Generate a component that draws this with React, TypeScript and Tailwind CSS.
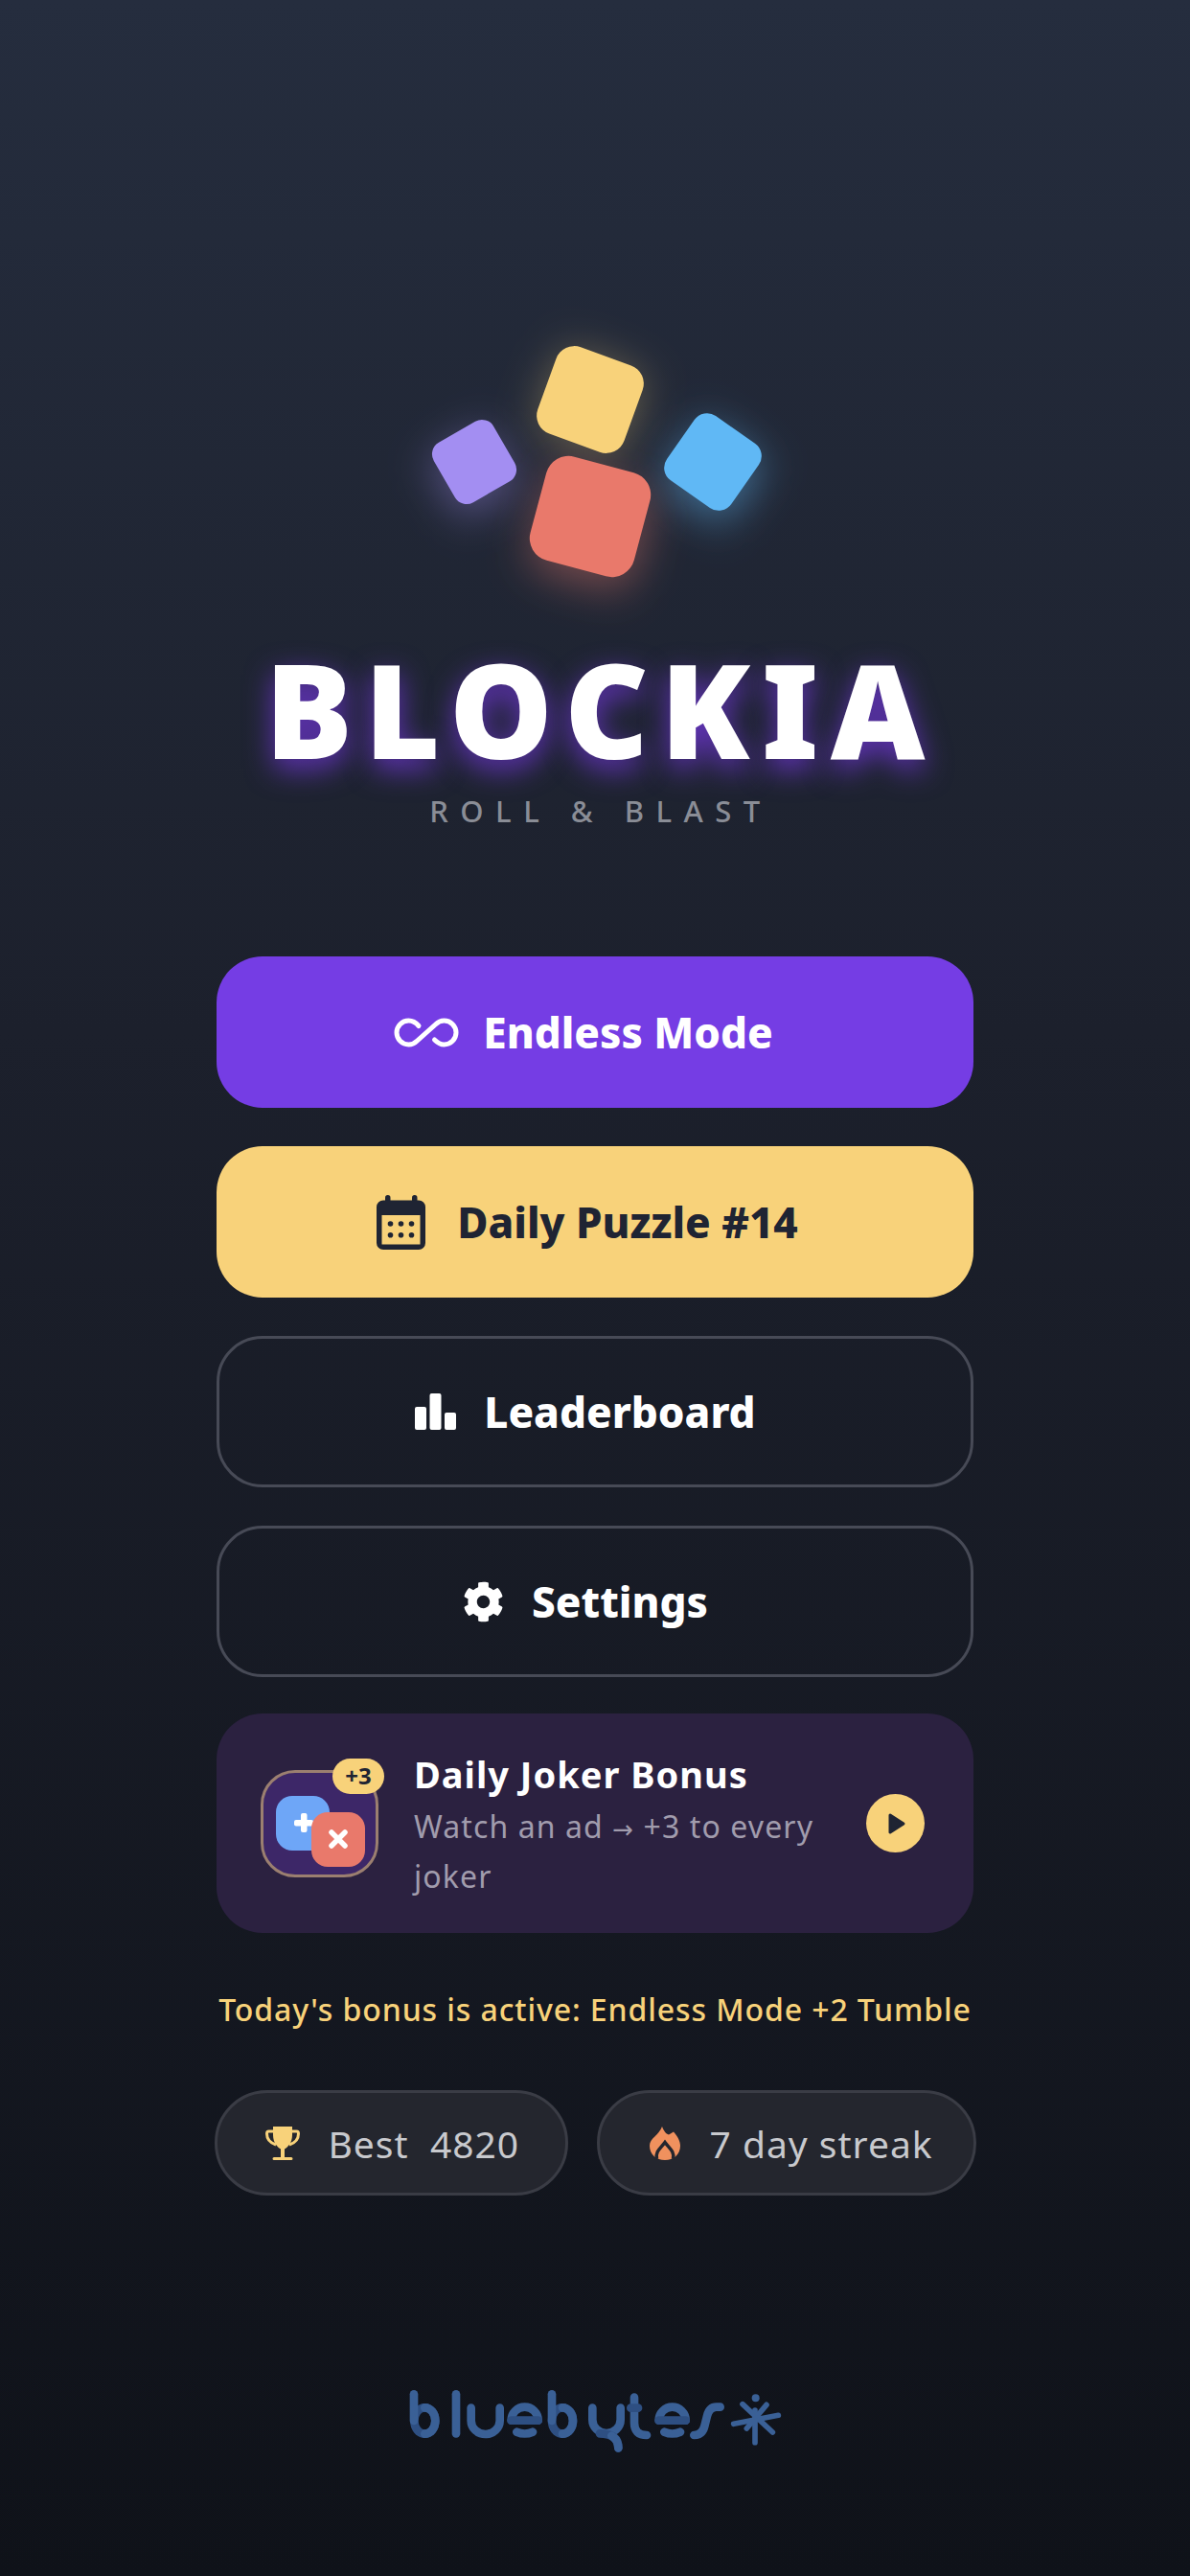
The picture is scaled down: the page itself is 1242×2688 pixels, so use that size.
import { FaCog } from 'react-icons/fa';
import type { ReactNode } from 'react';

const font = "font-['Noto_Sans',sans-serif]";

const blocks = [
    { cx: 215, cy: 97, size: 96, radius: 20, angle: 20, color: '#f8d27a', glow: 'rgba(248,210,122,0.32)', dy: 4 },
    { cx: 343, cy: 162, size: 82, radius: 16, angle: 35, color: '#60b8f5', glow: 'rgba(96,184,245,0.5)', dy: 12 },
    { cx: 94, cy: 162, size: 72, radius: 14, angle: -30, color: '#a38ef2', glow: 'rgba(163,142,242,0.42)', dy: 12 },
    { cx: 215, cy: 219, size: 112, radius: 24, angle: 15, color: '#e9796b', glow: 'rgba(233,121,107,0.42)', dy: 14 },
];

function BlockCluster() {
    return (
        <svg width="440" height="320" viewBox="0 0 440 320" className="block overflow-visible">
            <defs>
                <filter id="soft" x="-100%" y="-100%" width="300%" height="300%">
                    <feGaussianBlur stdDeviation="22" />
                </filter>
            </defs>
            {blocks.map((b) => (
                <rect
                    key={`glow-${b.color}`}
                    x={b.cx - b.size / 2}
                    y={b.cy - b.size / 2 + b.dy}
                    width={b.size}
                    height={b.size}
                    rx={b.radius}
                    fill={b.glow}
                    filter="url(#soft)"
                    transform={`rotate(${b.angle} ${b.cx} ${b.cy + b.dy})`}
                />
            ))}
            {blocks.map((b) => (
                <rect
                    key={b.color}
                    x={b.cx - b.size / 2}
                    y={b.cy - b.size / 2}
                    width={b.size}
                    height={b.size}
                    rx={b.radius}
                    fill={b.color}
                    transform={`rotate(${b.angle} ${b.cx} ${b.cy})`}
                />
            ))}
        </svg>
    );
}

function InfinityIcon() {
    return (
        <svg width="68" height="31" viewBox="0 0 68 31" fill="none" stroke="currentColor" strokeWidth="5" strokeLinecap="round">
            <path d="M26 8.500 C23 5 19.500 3 15.500 3 A12.500 12.500 0 0 0 15.500 28 C19 28 22 26.500 24.500 24 L43.500 7 C46 4.500 49 3 52.500 3 A12.500 12.500 0 0 1 52.500 28 C48.500 28 45.500 26 42.500 23" />
        </svg>
    );
}

function CalendarIcon() {
    return (
        <svg width="51" height="57" viewBox="0 0 51 57" fill="#1f2433">
            <rect x="9" y="0" width="5.500" height="10" rx="2.700" />
            <rect x="37" y="0" width="5.500" height="10" rx="2.700" />
            <path fillRule="evenodd" d="M7 5.500 H44 A7 7 0 0 1 51 12.500 V50 A7 7 0 0 1 44 57 H7 A7 7 0 0 1 0 50 V12.500 A7 7 0 0 1 7 5.500 Z M5.500 21 V51.500 H45.500 V21 Z" />
            {[14.5, 25.5, 36.5].map((x) => (
                <g key={x}>
                    <circle cx={x} cy="30" r="2.800" />
                    <circle cx={x} cy="41.700" r="2.800" />
                </g>
            ))}
        </svg>
    );
}

function BarsIcon() {
    return (
        <svg width="43" height="38" viewBox="0 0 43 38" fill="currentColor">
            <rect x="0" y="14" width="12" height="24" rx="2" />
            <rect x="15.500" y="0" width="12" height="38" rx="2" />
            <rect x="31" y="20" width="12" height="18" rx="2" />
        </svg>
    );
}

function TrophyIcon() {
    return (
        <svg width="36" height="35" viewBox="0 0 36 35" fill="#f8d27a">
            <path d="M8 0 H28 V9 C28 17 23 22 20 23.500 V32 H27 A1.500 1.500 0 0 1 27 35 H9 A1.500 1.500 0 0 1 9 32 H16 V23.500 C13 22 8 17 8 9 Z" />
            <path d="M9 5 H3.500 C2 5 1.500 6 1.500 7.500 C1.500 13 5 17 11 19" fill="none" stroke="#f8d27a" strokeWidth="3" />
            <path d="M27 5 H32.500 C34 5 34.500 6 34.500 7.500 C34.500 13 31 17 25 19" fill="none" stroke="#f8d27a" strokeWidth="3" />
        </svg>
    );
}

function FlameIcon() {
    return (
        <svg width="32" height="35" viewBox="0 0 32 35" fill="none">
            <path fill="#f0915e" d="M13 0 C15 5 17 7.500 20 8.500 L25 5.500 C29 10 32 15 32 20 C32 29 25 35 16 35 C7 35 0 29 0 20 C0 12 10 9 13 0 Z" />
            <path stroke="#24262e" strokeWidth="3.500" d="M7.500 34 C5.500 26 12 22 16 16.500 C20 22 26.500 26 24.500 34" />
        </svg>
    );
}

function BlueBytesLogo() {
    const light = '#3a6096';
    const dark = '#2e4f82';
    return (
        <svg width="440" height="120" viewBox="0 0 1320 360" fill="none" stroke={light} strokeWidth="26" strokeLinecap="round" role="img" aria-label="bluebytes">
            {/* b */}
            <ellipse cx="127" cy="198" rx="33" ry="41" stroke={dark} />
            <path d="M93 115 V198" />
            <path d="M127 157 A33 41 0 0 1 127 239" />
            {/* l */}
            <path d="M225 115 V238" />
            {/* u */}
            <path d="M272 158 V198 A45 42 0 0 0 362 198 V158" />
            {/* e */}
            <path d="M398 197 A42 42 0 0 1 482 197" />
            <path d="M398 197 H482" stroke={dark} />
            <path d="M415 233 Q440 244 465 233" />
            {/* b */}
            <ellipse cx="558" cy="198" rx="33" ry="41" stroke={dark} />
            <path d="M525 115 V198" />
            <path d="M558 157 A33 41 0 0 1 558 239" />
            {/* y */}
            <path d="M652 158 V195 A44 42 0 0 0 740 195 V158" />
            <path d="M675 238 Q733 238 733 283" stroke={dark} />
            <path d="M712 245 Q733 258 733 283" />
            {/* t */}
            <path d="M783 125 V205 Q783 243 822 243" />
            <path d="M772 158 H795" stroke={dark} />
            {/* e */}
            <path d="M860 197 A42 42 0 0 1 944 197" />
            <path d="M860 197 H944" stroke={dark} />
            <path d="M877 233 Q902 244 927 233" />
            {/* s */}
            <path d="M1052 155 H1040 Q1018 155 1011 183 L1003 215 Q996 243 970 243" />
            {/* asterisk */}
            <g strokeWidth="17">
                <path d="M1094 208 L1234 181" />
                <path d="M1161 165 L1161 266" />
                <path d="M1122 146 L1216 234" />
                <path d="M1197 148 L1135 222" />
            </g>
            <circle cx="1163" cy="127" r="12" fill={light} stroke="none" />
        </svg>
    );
}

function MenuButton({ className, icon, gap, label }: { className: string; icon: ReactNode; gap: string; label: string }) {
    return (
        <button className={`flex h-[158px] w-[790px] items-center justify-center rounded-[48px] ${gap} ${className}`}>
            {icon}
            <span className={`${font} text-[44px] font-extrabold leading-none`}>{label}</span>
        </button>
    );
}

function JokerCard() {
    return (
        <div className="mt-[38px] flex h-[229px] w-[790px] items-center rounded-[48px] bg-[#2b2140] pl-[46px] pr-[51px]">
            {/* Joker tile with the two dice and its +3 badge */}
            <div className="relative h-[112px] w-[123px] shrink-0 rounded-[36px] border-[3px] border-[#9b7f70] bg-[#3d2768]">
                <div className="absolute left-[13px] top-[24px] flex h-[57px] w-[56px] items-center justify-center rounded-[17px] bg-[#6ea6f7]">
                    <svg width="24" height="24" viewBox="0 0 24 24" className="-mr-[1px]" fill="#fff">
                        <rect x="9" y="2" width="6.500" height="20" rx="2" />
                        <rect x="2" y="9" width="20" height="6.500" rx="2" />
                    </svg>
                </div>
                <div className="absolute left-[50px] top-[41px] flex h-[57px] w-[56px] items-center justify-center rounded-[17px] bg-[#e9796b]">
                    <svg width="22" height="22" viewBox="0 0 22 22" stroke="#fff" strokeWidth="5.500" strokeLinecap="round">
                        <path d="M4 4 L18 18 M18 4 L4 18" />
                    </svg>
                </div>
                <div className={`absolute -right-[9px] -top-[15px] flex h-[37px] w-[54px] items-center justify-center rounded-full bg-[#f8d27a] text-[24px] font-bold text-[#1f2433] ${font}`}>
                    +3
                </div>
            </div>
            <div className="ml-[37px] flex-1 pt-[10px]">
                <div className={`${font} text-[38px] font-bold leading-[40px] tracking-[1px] text-white`}>Daily Joker Bonus</div>
                <div className={`${font} mt-[9px] text-[32px] leading-[52px] tracking-[1.1px] text-[#a19cad]`}>
                    Watch an ad <span className="font-['DejaVu_Sans',sans-serif] text-[26px] leading-none">→</span> +3 to every
                    <br />
                    joker
                </div>
            </div>
            <div className="flex h-[61px] w-[61px] shrink-0 items-center justify-center rounded-full bg-[#f8d27a]">
                <svg width="20" height="24" viewBox="0 0 20 24" className="ml-[3px]" fill="#1f2433" stroke="#1f2433" strokeWidth="3" strokeLinejoin="round">
                    <path d="M3 3 L17 12 L3 21 Z" />
                </svg>
            </div>
        </div>
    );
}

function StatPill({ width, icon, label, pad, gap }: { width: string; icon: ReactNode; label: string; pad: string; gap: string }) {
    return (
        <div className={`flex h-[110px] items-center rounded-full border-[3px] border-[#3a3c45] bg-[#24262e] ${width} ${pad} ${gap}`}>
            {icon}
            <span className={`${font} whitespace-pre text-[39px] leading-none tracking-[1px] text-[#c8c9cd]`}>{label}</span>
        </div>
    );
}

export default function App() {
    return (
        <div className="flex h-[2688px] w-[1242px] flex-col items-center overflow-hidden bg-[linear-gradient(180deg,#252d3e_0%,#1c202c_40%,#0f1219_100%)]">
            {/* Logo */}
            <div className="mt-[320px]">
                <BlockCluster />
            </div>
            <h1 className={`${font} mt-[30px] h-[140px] pl-[12px] text-[136px] font-black leading-[140px] tracking-[12px] text-white [text-shadow:0_10px_30px_rgba(124,58,237,0.75)]`}>
                BLOCKIA
            </h1>
            <div className={`${font} mt-[14px] pl-[12px] text-[31px] font-medium leading-[44px] tracking-[12.5px] text-[#8a8d96]`}>ROLL &amp; BLAST</div>

            {/* Menu */}
            <div className="mt-[130px] flex flex-col items-center gap-[40px]">
                <MenuButton className="bg-[#753de4] pr-[24px] text-white" gap="gap-[25px]" icon={<InfinityIcon />} label="Endless Mode" />
                <MenuButton className="bg-[#f8d27a] pr-[16px] text-[#1f2433]" gap="gap-[33px]" icon={<CalendarIcon />} label="Daily Puzzle #14" />
                <MenuButton className="border-[3px] border-[#474a56] pr-[20px] text-white" gap="gap-[29px]" icon={<BarsIcon />} label="Leaderboard" />
                <MenuButton className="border-[3px] border-[#474a56] pr-[20px] text-white" gap="gap-[29px]" icon={<FaCog size={43} />} label="Settings" />
            </div>

            <JokerCard />

            <div className={`${font} mt-[58px] text-[32px] font-medium leading-[44px] tracking-[0.9px] text-[#f8d27a]`}>Today's bonus is active: Endless Mode +2 Tumble</div>

            {/* Stats */}
            <div className="mt-[62px] flex gap-[30px]">
                <StatPill width="w-[369px]" pad="pl-[50px]" gap="gap-[30px]" icon={<TrophyIcon />} label="Best  4820" />
                <StatPill width="w-[396px]" pad="pl-[52px]" gap="gap-[31px]" icon={<FlameIcon />} label="7 day streak" />
            </div>

            <div className="mt-[169px]">
                <BlueBytesLogo />
            </div>
        </div>
    );
}
